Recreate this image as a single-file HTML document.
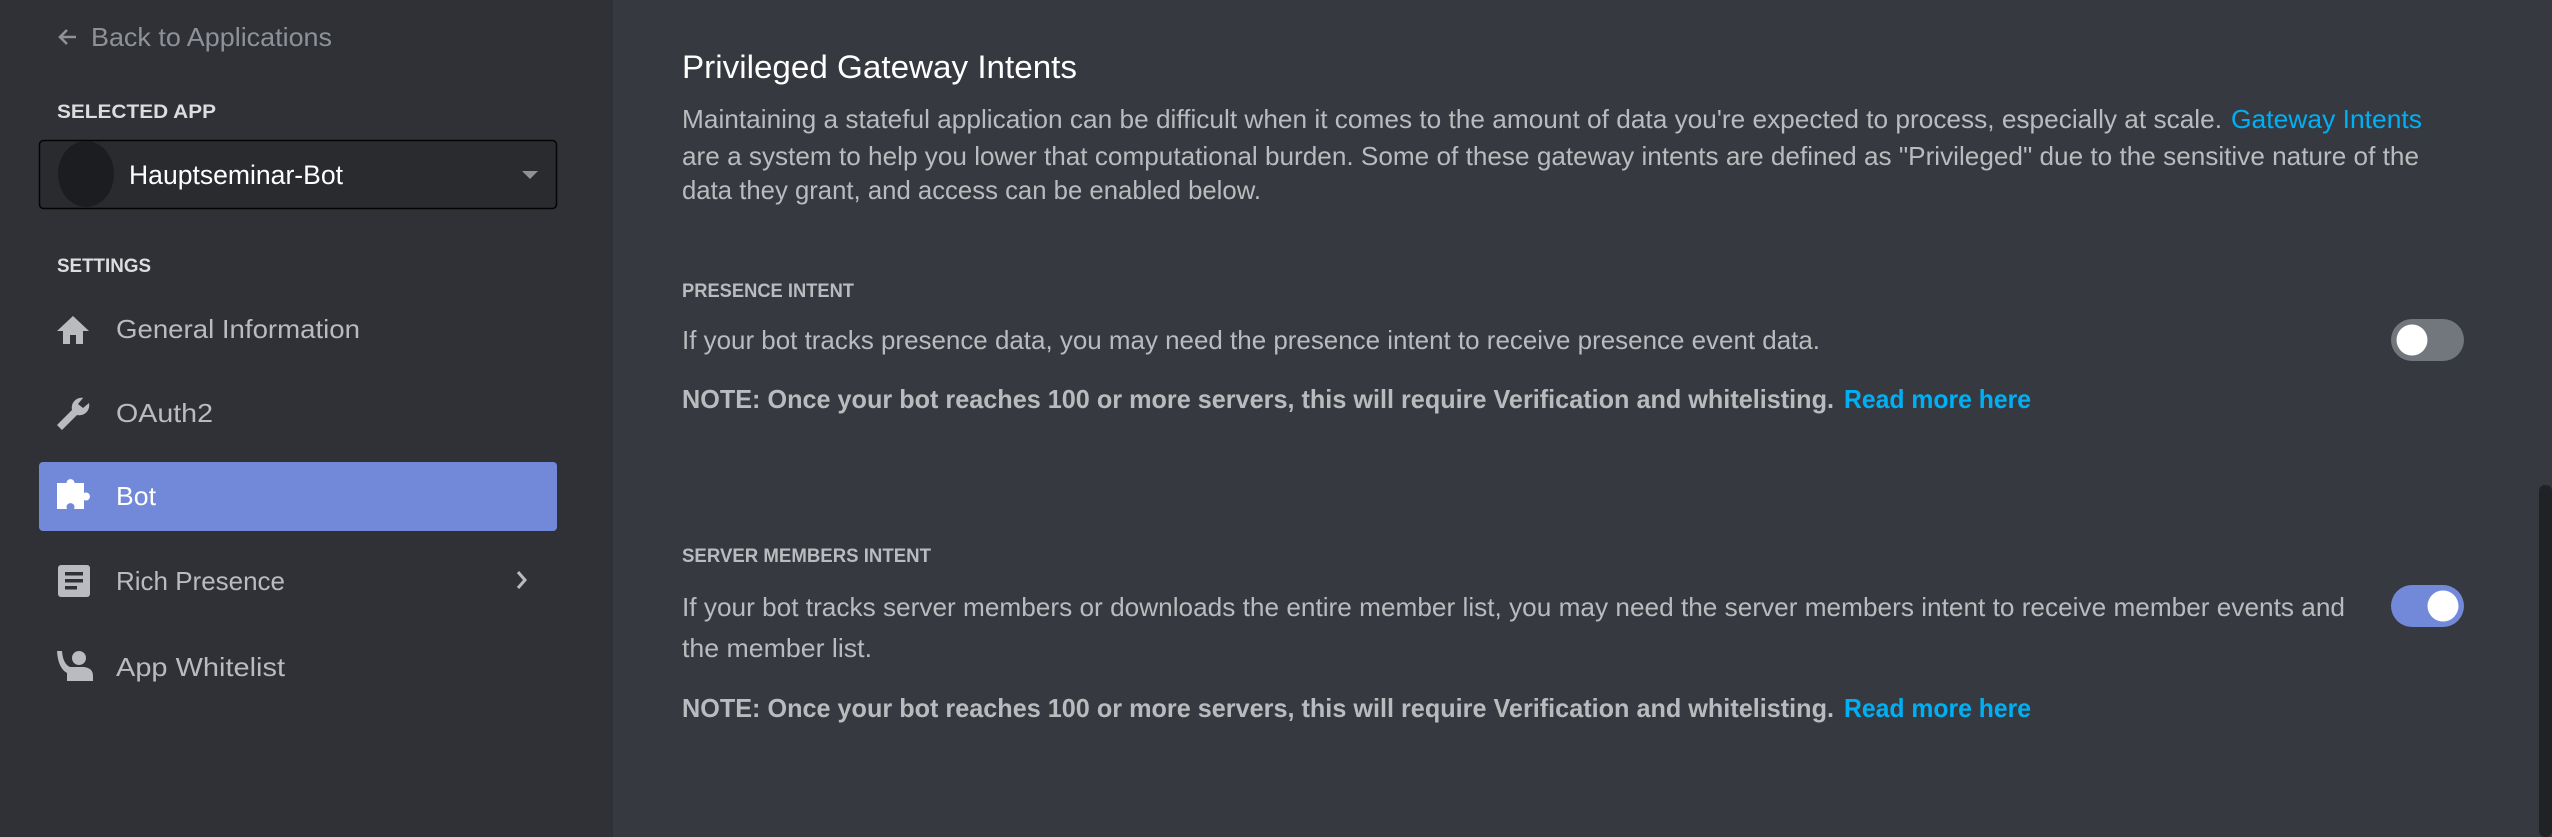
<!DOCTYPE html>
<html><head><meta charset="utf-8"><style>
html,body{margin:0;padding:0;background:#36393f;width:2552px;height:837px;overflow:hidden}
svg{display:block}
text{font-family:"Liberation Sans",sans-serif}
</style></head><body>
<svg width="2552" height="837" viewBox="0 0 2552 837" xmlns="http://www.w3.org/2000/svg">
<rect x="0" y="0" width="2552" height="837" fill="#36393f"/>
<rect x="0" y="0" width="613" height="837" fill="#2f3136"/>
<rect x="2539" y="485" width="13" height="352" rx="6" fill="#202225"/>

<!-- sidebar -->
<path d="M76 37 H60 M67 30 L60 37 L67 44" stroke="#8e9297" stroke-width="2.6" fill="none"/>
<text x="91" y="46" font-size="26" fill="#8e9297" textLength="241" lengthAdjust="spacingAndGlyphs">Back to Applications</text>
<text x="57" y="118" font-size="19" font-weight="bold" fill="#dcddde" textLength="159" lengthAdjust="spacingAndGlyphs">SELECTED APP</text>
<rect x="39.5" y="140.5" width="517" height="68" rx="4" fill="#292b2f" stroke="#040405" stroke-width="1.5"/>
<ellipse cx="86" cy="207" rx="28" ry="33" fill="#1c1d20" transform="translate(0,-33)"/>
<ellipse cx="86" cy="174" rx="0" ry="0" fill="none"/>
<text x="129" y="184" font-size="27" fill="#ffffff" textLength="214" lengthAdjust="spacingAndGlyphs">Hauptseminar-Bot</text>
<path d="M522 171 L538 171 L530 179 Z" fill="#8e9297"/>
<text x="57" y="272" font-size="19" font-weight="bold" fill="#dcddde" textLength="94" lengthAdjust="spacingAndGlyphs">SETTINGS</text>

<path d="M73 316 L57 331 H63 V344 H70 V335 H76 V344 H83 V331 H89 Z" fill="#b9bbbe"/>
<text x="116" y="338" font-size="26" fill="#b9bbbe" textLength="244" lengthAdjust="spacingAndGlyphs">General Information</text>
<path d="M84 398 a10 10 0 0 0 -12 12 L57 425 L62 430 L77 415 a10 10 0 0 0 12 -12 l-6 5 l-5 -4 l5 -6 z" fill="#b9bbbe"/>
<text x="116" y="422" font-size="26" fill="#b9bbbe" textLength="97" lengthAdjust="spacingAndGlyphs">OAuth2</text>
<rect x="39" y="462" width="518" height="69" rx="4" fill="#7289da"/>
<path d="M57 483 H67 V485 a4 4 0 1 1 7 0 V483 H84 V493 a4 4 0 1 1 0 7 V509 H74 a4 4 0 1 0 -7 0 H57 Z" fill="#ffffff"/>
<text x="116" y="505" font-size="26" fill="#ffffff" textLength="40" lengthAdjust="spacingAndGlyphs">Bot</text>
<rect x="58" y="565" width="32" height="32" rx="3" fill="#b9bbbe"/>
<rect x="65" y="572" width="18" height="3.5" fill="#2f3136"/>
<rect x="65" y="579" width="18" height="3.5" fill="#2f3136"/>
<rect x="65" y="586" width="12" height="3.5" fill="#2f3136"/>
<text x="116" y="590" font-size="26" fill="#b9bbbe" textLength="169" lengthAdjust="spacingAndGlyphs">Rich Presence</text>
<path d="M518 572 L525 580 L518 588" stroke="#b9bbbe" stroke-width="3" fill="none"/>
<circle cx="79" cy="658" r="7" fill="#b9bbbe"/>
<path d="M57 651 H62 Q63 664 70 667 H84 Q93 668 93 676 V681 H67 V673 Q58 668 57 651 Z" fill="#b9bbbe"/>
<text x="116" y="676" font-size="26" fill="#b9bbbe" textLength="169" lengthAdjust="spacingAndGlyphs">App Whitelist</text>

<!-- main -->
<text x="682" y="78" font-size="32" fill="#ffffff" textLength="395" lengthAdjust="spacingAndGlyphs">Privileged Gateway Intents</text>
<text x="682" y="128" font-size="26" fill="#b9bbbe" textLength="1540" lengthAdjust="spacingAndGlyphs">Maintaining a stateful application can be difficult when it comes to the amount of data you're expected to process, especially at scale.</text>
<text x="2231" y="128" font-size="26" fill="#00b0f4" textLength="191" lengthAdjust="spacingAndGlyphs">Gateway Intents</text>
<text x="682" y="165" font-size="26" fill="#b9bbbe" textLength="1737" lengthAdjust="spacingAndGlyphs">are a system to help you lower that computational burden. Some of these gateway intents are defined as "Privileged" due to the sensitive nature of the</text>
<text x="682" y="199" font-size="26" fill="#b9bbbe" textLength="579" lengthAdjust="spacingAndGlyphs">data they grant, and access can be enabled below.</text>

<text x="682" y="297" font-size="19" font-weight="bold" fill="#b9bbbe" textLength="172" lengthAdjust="spacingAndGlyphs">PRESENCE INTENT</text>
<text x="682" y="349" font-size="26" fill="#b9bbbe" textLength="1138" lengthAdjust="spacingAndGlyphs">If your bot tracks presence data, you may need the presence intent to receive presence event data.</text>
<text x="682" y="408" font-size="26" font-weight="bold" fill="#b9bbbe" textLength="1152" lengthAdjust="spacingAndGlyphs">NOTE: Once your bot reaches 100 or more servers, this will require Verification and whitelisting.</text>
<text x="1844" y="408" font-size="26" font-weight="bold" fill="#00b0f4" textLength="187" lengthAdjust="spacingAndGlyphs">Read more here</text>

<rect x="2391" y="319" width="73" height="42" rx="21" fill="#72767d"/>
<circle cx="2412" cy="340" r="15.5" fill="#ffffff"/>

<text x="682" y="562" font-size="19" font-weight="bold" fill="#b9bbbe" textLength="249" lengthAdjust="spacingAndGlyphs">SERVER MEMBERS INTENT</text>
<text x="682" y="616" font-size="26" fill="#b9bbbe" textLength="1663" lengthAdjust="spacingAndGlyphs">If your bot tracks server members or downloads the entire member list, you may need the server members intent to receive member events and</text>
<text x="682" y="657" font-size="26" fill="#b9bbbe" textLength="190" lengthAdjust="spacingAndGlyphs">the member list.</text>
<text x="682" y="717" font-size="26" font-weight="bold" fill="#b9bbbe" textLength="1152" lengthAdjust="spacingAndGlyphs">NOTE: Once your bot reaches 100 or more servers, this will require Verification and whitelisting.</text>
<text x="1844" y="717" font-size="26" font-weight="bold" fill="#00b0f4" textLength="187" lengthAdjust="spacingAndGlyphs">Read more here</text>

<rect x="2391" y="585" width="73" height="42" rx="21" fill="#7289da"/>
<circle cx="2443" cy="606" r="15.5" fill="#ffffff"/>
</svg>
</body></html>
